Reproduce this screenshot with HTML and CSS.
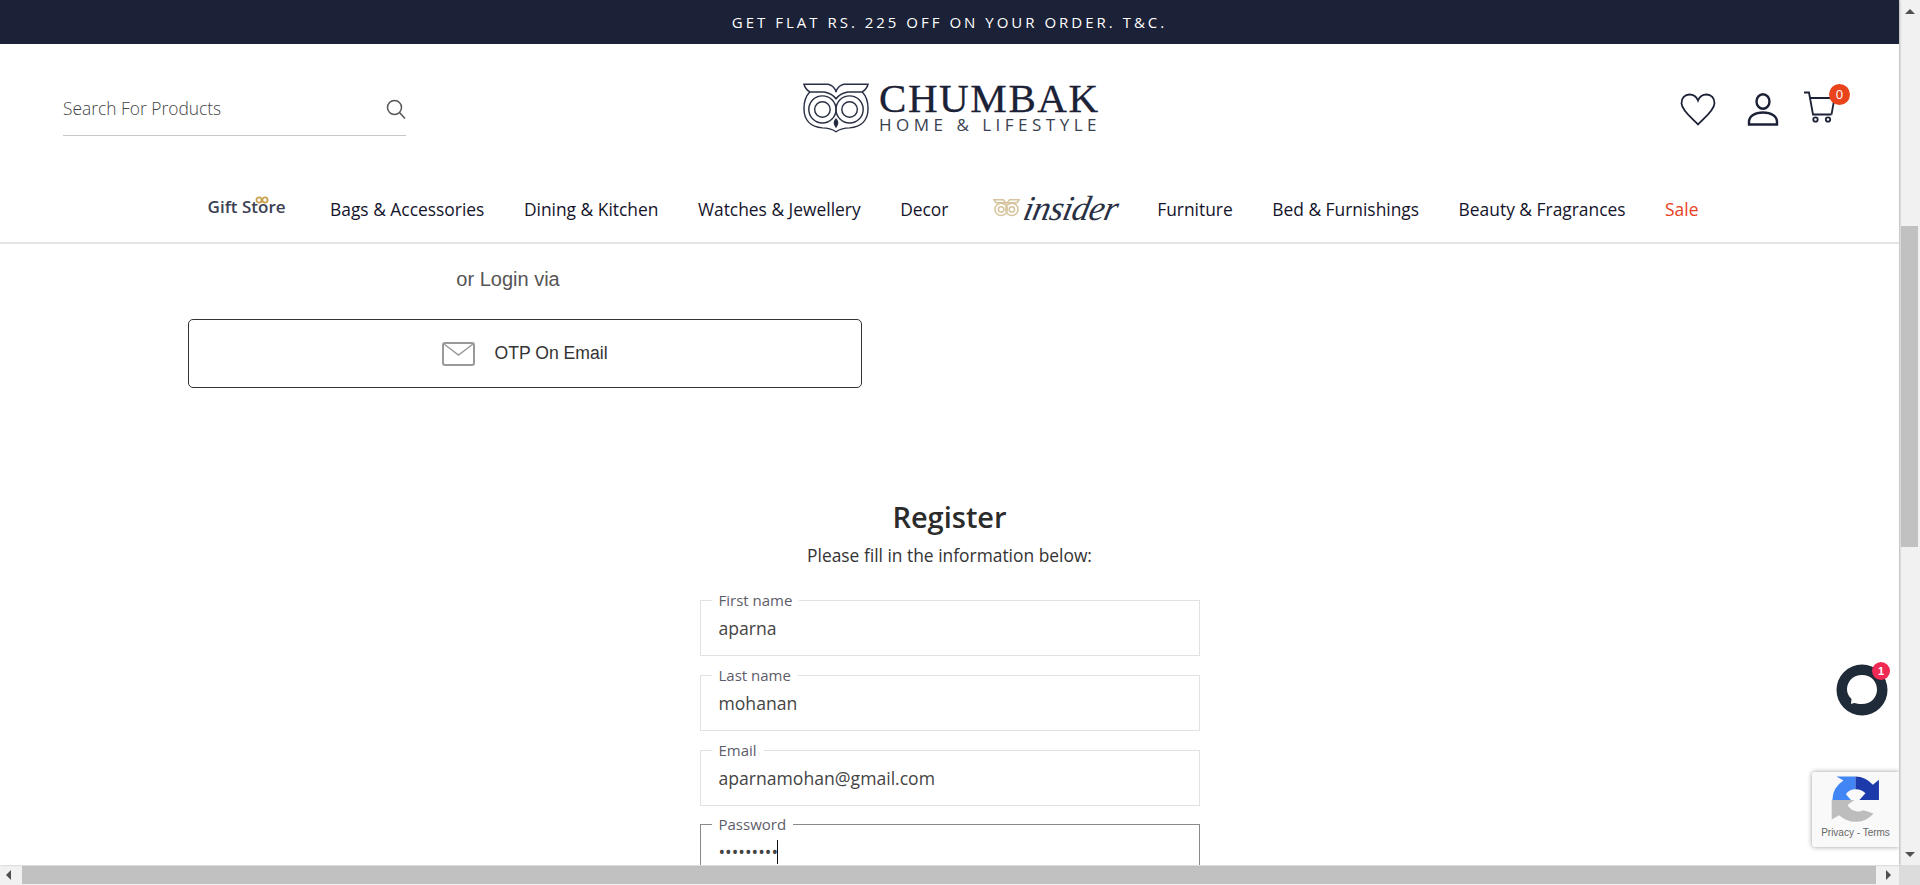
FILE: index.html
```html
<!DOCTYPE html>
<html lang="en">

<head>
    <meta charset="UTF-8">
    <title>Chumbak - Account</title>
    <link rel="stylesheet" href="styles.css">
</head>

<body>
    <div class="window">
        <div class="page">
            <div class="announcement">GET FLAT RS. 225 OFF ON YOUR ORDER. T&amp;C.</div>

            <header class="site-header">
                <div class="header-row">
                    <form class="search">
                        <input class="search-input" type="text" placeholder="Search For Products">
                        <svg class="search-icon" width="20" height="20" viewBox="0 0 20 20" fill="none" stroke="#555" stroke-width="1.5">
                            <circle cx="8.5" cy="8.5" r="7"/>
                            <path d="M13.5 13.5L19 19.5"/>
                        </svg>
                    </form>

                    <a class="logo" href="#">
                        <svg class="owl" width="66" height="51" viewBox="0 0 68 52" fill="none" stroke="#2a3044" stroke-width="1.5">
                            <path d="M1 2H26C30 3 33 6 34 10C35 6 38 3 42 2H67C66 6 64 8 61 10H46C41 11 37 13 34 17C31 13 27 11 22 10H7C4 8 2 6 1 2Z"/>
                            <path d="M7 10C3 14 1 20 1 27C1 39 8 46 20 47C26 47 31 49 34 51C37 49 42 47 48 47C60 46 67 39 67 27C67 20 65 14 61 10"/>
                            <circle cx="20" cy="28" r="14"/>
                            <circle cx="20" cy="28" r="8"/>
                            <circle cx="48" cy="28" r="14"/>
                            <circle cx="48" cy="28" r="8"/>
                            <path d="M34 38C36 40 36 43 34 46C32 43 32 40 34 38Z" fill="#1b2136"/>
                        </svg>
                        <span class="logo-text">
                            <span class="logo-name">CHUMBAK</span>
                            <span class="logo-tag">HOME &amp; LIFESTYLE</span>
                        </span>
                    </a>

                    <div class="header-icons">
                        <svg width="36" height="33" viewBox="0 0 36 33" fill="none" stroke="#1b2136" stroke-width="1.8">
                            <path d="M18 31.500C13 26 2 18 1.500 10.500C1.200 5 5 1.500 9.500 1.500C13 1.500 16.500 3.800 18 7.500C19.500 3.800 23 1.500 26.500 1.500C31 1.500 34.800 5 34.500 10.500C34 18 23 26 18 31.500Z"/>
                        </svg>
                        <svg class="user-icon" width="32" height="33" viewBox="0 0 32 33" fill="none" stroke="#1b2136" stroke-width="2.4">
                            <ellipse cx="16" cy="8.500" rx="6.500" ry="7.200"/>
                            <path d="M2 31.500H30V29C30 23 24 19.500 16 19.500C8 19.500 2 23 2 29Z"/>
                        </svg>
                        <div class="cart">
                            <svg width="34" height="32" viewBox="0 0 34 32" fill="none" stroke="#1b2136" stroke-width="1.8">
                                <path d="M1 1.500H6L10 23.500H28.500"/>
                                <path d="M7 7H31.500L28.500 23.500"/>
                                <circle cx="12.500" cy="28.500" r="2.200"/>
                                <circle cx="25" cy="28.500" r="2.200"/>
                            </svg>
                            <span class="cart-count">0</span>
                        </div>
                    </div>
                </div>

                <nav class="main-nav">
                    <a class="gift-link" href="#">Gift St<span class="gift-o">o<svg class="bow" width="14" height="8" viewBox="0 0 14 8" fill="none" stroke="#c9a24f" stroke-width="1.800"><circle cx="4" cy="4" r="2.600"/><circle cx="10" cy="4" r="2.600"/></svg></span>re</a>
                    <a href="#">Bags &amp; Accessories</a>
                    <a href="#">Dining &amp; Kitchen</a>
                    <a href="#">Watches &amp; Jewellery</a>
                    <a href="#">Decor</a>
                    <a class="insider-link" href="#">
                        <svg width="27" height="20" viewBox="0 0 68 52" fill="none" stroke="#d5c49c" stroke-width="4">
                            <path d="M1 2H26L34 12L42 2H67L61 10H7Z"/>
                            <circle cx="20" cy="27" r="16"/>
                            <circle cx="20" cy="27" r="7"/>
                            <circle cx="48" cy="27" r="16"/>
                            <circle cx="48" cy="27" r="7"/>
                        </svg>
                        <span class="insider-word">insider</span>
                    </a>
                    <a href="#">Furniture</a>
                    <a href="#">Bed &amp; Furnishings</a>
                    <a href="#">Beauty &amp; Fragrances</a>
                    <a class="sale-link" href="#">Sale</a>
                </nav>
            </header>

            <main>
                <section class="login-via">
                    <p class="login-via-title">or Login via</p>
                    <button class="otp-button" type="button">
                        <svg width="33" height="24" viewBox="0 0 33 24" fill="none" stroke="#999" stroke-width="2">
                            <rect x="1" y="1" width="31" height="22" rx="2"/>
                            <path d="M2 2L16.500 13L31 2" stroke-width="1.400"/>
                        </svg>
                        OTP On Email
                    </button>
                </section>

                <section class="register">
                    <h1>Register</h1>
                    <p class="register-note">Please fill in the information below:</p>
                    <form>
                        <fieldset class="field">
                            <legend>First name</legend>
                            <input type="text" value="aparna">
                        </fieldset>
                        <fieldset class="field">
                            <legend>Last name</legend>
                            <input type="text" value="mohanan">
                        </fieldset>
                        <fieldset class="field">
                            <legend>Email</legend>
                            <input type="text" value="aparnamohan@gmail.com">
                        </fieldset>
                        <fieldset class="field field-active">
                            <legend>Password</legend>
                            <div class="password-row">
                                <input class="password-input" type="password" value="aparna123">
                                <span class="caret"></span>
                            </div>
                        </fieldset>
                    </form>
                </section>
            </main>

            <!-- floating widgets -->
            <div class="chat-bubble">
                <svg width="52" height="52" viewBox="0 0 52 52">
                    <circle cx="26" cy="26" r="25.500" fill="#1f2b38"/>
                    <path d="M15 40L15.500 35C12.500 32 11 29 11 25.500C11 17 17.500 11 26 11C34.500 11 41 17 41 25.500C41 34 34.500 40 26 40C23 40 20 39.500 18 39Z" fill="#fff"/>
                </svg>
                <span class="chat-count">1</span>
            </div>

            <div class="recaptcha">
                <svg width="54" height="54" viewBox="150 410 160 160">
                    <path d="M228 420A70 70 0 0 1 280 445L298 430V490H240L258 470A40 40 0 0 0 228 458Z" fill="#1c3aa9"/>
                    <path d="M228 420V458A34 34 0 0 0 200 473L215 490H160A70 70 0 0 1 193 432L172 420Z" fill="#4285f4"/>
                    <path d="M158 490H225L205 505A35 35 0 0 0 252 520L282 530A70 70 0 0 1 180 535L158 548Z" fill="#bdbdbd"/>
                </svg>
                <span class="recaptcha-links">Privacy - Terms</span>
            </div>
        </div>

        <div class="vscroll">
            <span class="arrow arrow-up"></span>
            <div class="vscroll-track">
                <div class="vscroll-thumb"></div>
            </div>
            <span class="arrow arrow-down"></span>
        </div>

        <div class="hscroll">
            <span class="arrow arrow-left"></span>
            <div class="hscroll-thumb"></div>
            <span class="arrow arrow-right"></span>
        </div>

        <div class="scroll-corner"></div>
    </div>
</body>

</html>
```

FILE: styles.css
```css
html,
body {
    height: 100%;
    margin: 0;
    overflow: hidden;
}

body {
    background-color: #ffffff;
    color: #1b2136;
    font-family: "Open Sans", sans-serif;
}

a {
    color: inherit;
    text-decoration: none;
}

.window {
    display: grid;
    grid-template-columns: 1fr 21px;
    grid-template-rows: 1fr 20px;
    height: 100%;
}

.page {
    box-shadow: 1px 0 2px rgba(0, 0, 0, 0.25);
    overflow: hidden;
    position: relative;
}

.announcement {
    background-color: #1b2136;
    color: #ffffff;
    font-size: 15px;
    height: 44px;
    letter-spacing: 3px;
    line-height: 44px;
    text-align: center;
}

.site-header {
    border-bottom: 2px solid #e4e4e4;
    box-sizing: border-box;
    height: 200px;
}

.header-row {
    align-items: flex-start;
    display: grid;
    grid-template-columns: 1fr auto 1fr;
    height: 128px;
    padding: 0 62px 0 63px;
}

.search {
    align-items: center;
    border-bottom: 1px solid #c8c8c8;
    display: flex;
    height: 52px;
    margin-top: 39px;
    width: 343px;
}

.search-input {
    border: 0;
    color: #444;
    flex: 1;
    font-family: "Open Sans", sans-serif;
    font-size: 17.4px;
    font-weight: 300;
    margin-top: -2px;
    outline: none;
    padding: 0;
}

.search-input::placeholder {
    color: #444;
    opacity: 1;
}

.search-icon {
    margin-top: -1px;
}

.logo {
    align-items: center;
    display: flex;
    gap: 10px;
    margin-left: 4px;
    margin-top: 37px;
}

.logo-text {
    display: flex;
    flex-direction: column;
    font-size: 0;
}

.logo-name {
    -webkit-text-stroke: 0.3px #1b2136;
    font-family: "Liberation Serif", serif;
    font-size: 41px;
    letter-spacing: 1.6px;
    line-height: 34px;
}

.logo-tag {
    color: #3a3f50;
    font-size: 17px;
    letter-spacing: 4.5px;
    line-height: 19px;
    white-space: nowrap;
}

.header-icons {
    align-items: center;
    display: flex;
    gap: 31px;
    justify-content: flex-end;
    margin-top: 47px;
}

.cart {
    margin-left: -7px;
    position: relative;
}

.cart-count {
    background-color: #e8431a;
    border-radius: 50%;
    color: #ffffff;
    font-size: 13px;
    height: 21px;
    line-height: 21px;
    position: absolute;
    right: -13px;
    text-align: center;
    top: -7px;
    width: 21px;
}

.main-nav {
    align-items: center;
    color: #14142b;
    display: flex;
    font-size: 17.4px;
    gap: 39.5px;
    height: 73px;
    justify-content: center;
    padding-left: 7px;
    white-space: nowrap;
}

.gift-link {
    color: #3b4052;
    font-size: 17px;
    font-weight: 600;
    margin-right: 5px;
    margin-top: -5px;
}

.gift-o {
    position: relative;
}

.bow {
    left: -3px;
    position: absolute;
    top: 1px;
}

.insider-link {
    align-items: center;
    display: flex;
    gap: 4px;
    margin-left: 5px;
}

.insider-word {
    color: #2a3044;
    display: inline-block;
    font-family: "Liberation Serif", serif;
    font-size: 35px;
    font-style: italic;
    letter-spacing: -0.5px;
    line-height: 40px;
    transform: skewX(-12deg);
}

.sale-link {
    color: #e8401c;
}

.login-via {
    margin-left: 188px;
    width: 674px;
}

.login-via-title {
    color: #555;
    font-family: "Liberation Sans", Arial, sans-serif;
    font-size: 20px;
    line-height: 24px;
    margin: 23px 0 28px;
    padding-right: 34px;
    text-align: center;
}

.otp-button {
    align-items: center;
    background: none;
    border: 1px solid #333;
    border-radius: 5px;
    color: #333;
    display: flex;
    font-family: "Liberation Sans", Arial, sans-serif;
    font-size: 17.6px;
    gap: 19px;
    height: 69px;
    justify-content: center;
    padding: 0;
    width: 100%;
}

.register {
    margin: 110px auto 0;
    text-align: center;
    width: 500px;
}

.register h1 {
    color: #2b2b2b;
    font-size: 29px;
    font-weight: 600;
    line-height: 38px;
    margin: 0;
}

.register-note {
    color: #333;
    font-size: 17.4px;
    font-weight: 400;
    line-height: 24px;
    margin: 7px 0 24px;
}

.field {
    border: 1px solid #e2e2e2;
    box-sizing: border-box;
    height: 65px;
    margin: 0 0 10px;
    padding: 0 16px;
    text-align: left;
}

.field legend {
    color: #5d5d6a;
    font-size: 15px;
    line-height: 18px;
    margin-left: -5px;
    padding: 0 7px;
}

.field input {
    border: 0;
    color: #444;
    font-family: "Open Sans", sans-serif;
    font-size: 17.6px;
    height: 28px;
    margin-top: 5px;
    outline: none;
    padding: 0 0 0 2px;
    width: 100%;
}

.field-active {
    border-color: #8a8a8a;
    margin-top: -1px;
}

.password-row {
    align-items: center;
    display: flex;
}

.field .password-input {
    width: 58px;
}

.caret {
    background-color: #111;
    height: 24px;
    margin-top: 4px;
    width: 1px;
}

.chat-bubble {
    height: 52px;
    position: absolute;
    right: 11px;
    top: 664px;
    width: 52px;
}

.chat-count {
    background-color: #ee2a55;
    border-radius: 50%;
    color: #ffffff;
    font-family: "Liberation Sans", Arial, sans-serif;
    font-size: 11px;
    font-weight: 700;
    height: 18px;
    line-height: 18px;
    position: absolute;
    right: -2px;
    text-align: center;
    top: -2px;
    width: 18px;
}

.recaptcha {
    align-items: center;
    background-color: #f9f9f9;
    border-radius: 3px 0 0 3px;
    box-shadow: 0 0 5px rgba(0, 0, 0, 0.4);
    display: flex;
    flex-direction: column;
    height: 75px;
    position: absolute;
    right: 0;
    top: 772px;
    width: 87px;
}

.recaptcha svg {
    margin-top: 1px;
}

.recaptcha-links {
    color: #666;
    font-family: "Liberation Sans", Arial, sans-serif;
    font-size: 10px;
    white-space: nowrap;
}

.vscroll {
    background-color: #f1f1f1;
    display: flex;
    flex-direction: column;
    grid-column: 2;
    grid-row: 1;
}

.vscroll-track {
    flex: 1;
    padding-top: 208px;
}

.vscroll-thumb {
    background-color: #c1c1c1;
    height: 321px;
    margin: 0 2px 0 2px;
}

.hscroll {
    align-items: center;
    background-color: #f1f1f1;
    display: flex;
    grid-column: 1;
    grid-row: 2;
}

.hscroll-thumb {
    background-color: #c1c1c1;
    height: 18px;
    margin-left: 5px;
    width: 1854px;
}

.scroll-corner {
    background-color: #dcdcdc;
    grid-column: 2;
    grid-row: 2;
}

.arrow {
    border-style: solid;
    display: block;
    flex: none;
    height: 0;
    width: 0;
}

.arrow-up {
    border-color: transparent transparent #505050;
    border-width: 0 5px 5px;
    margin: 9px 0 4px 6px;
}

.arrow-down {
    border-color: #505050 transparent transparent;
    border-width: 5px 5px 0;
    margin: 4px 0 8px 6px;
}

.arrow-left {
    border-color: transparent #505050 transparent transparent;
    border-width: 5px 5px 5px 0;
    margin-left: 6px;
    margin-right: 6px;
}

.arrow-right {
    border-color: transparent transparent transparent #505050;
    border-width: 5px 0 5px 5px;
    margin-left: 10px;
}
```
